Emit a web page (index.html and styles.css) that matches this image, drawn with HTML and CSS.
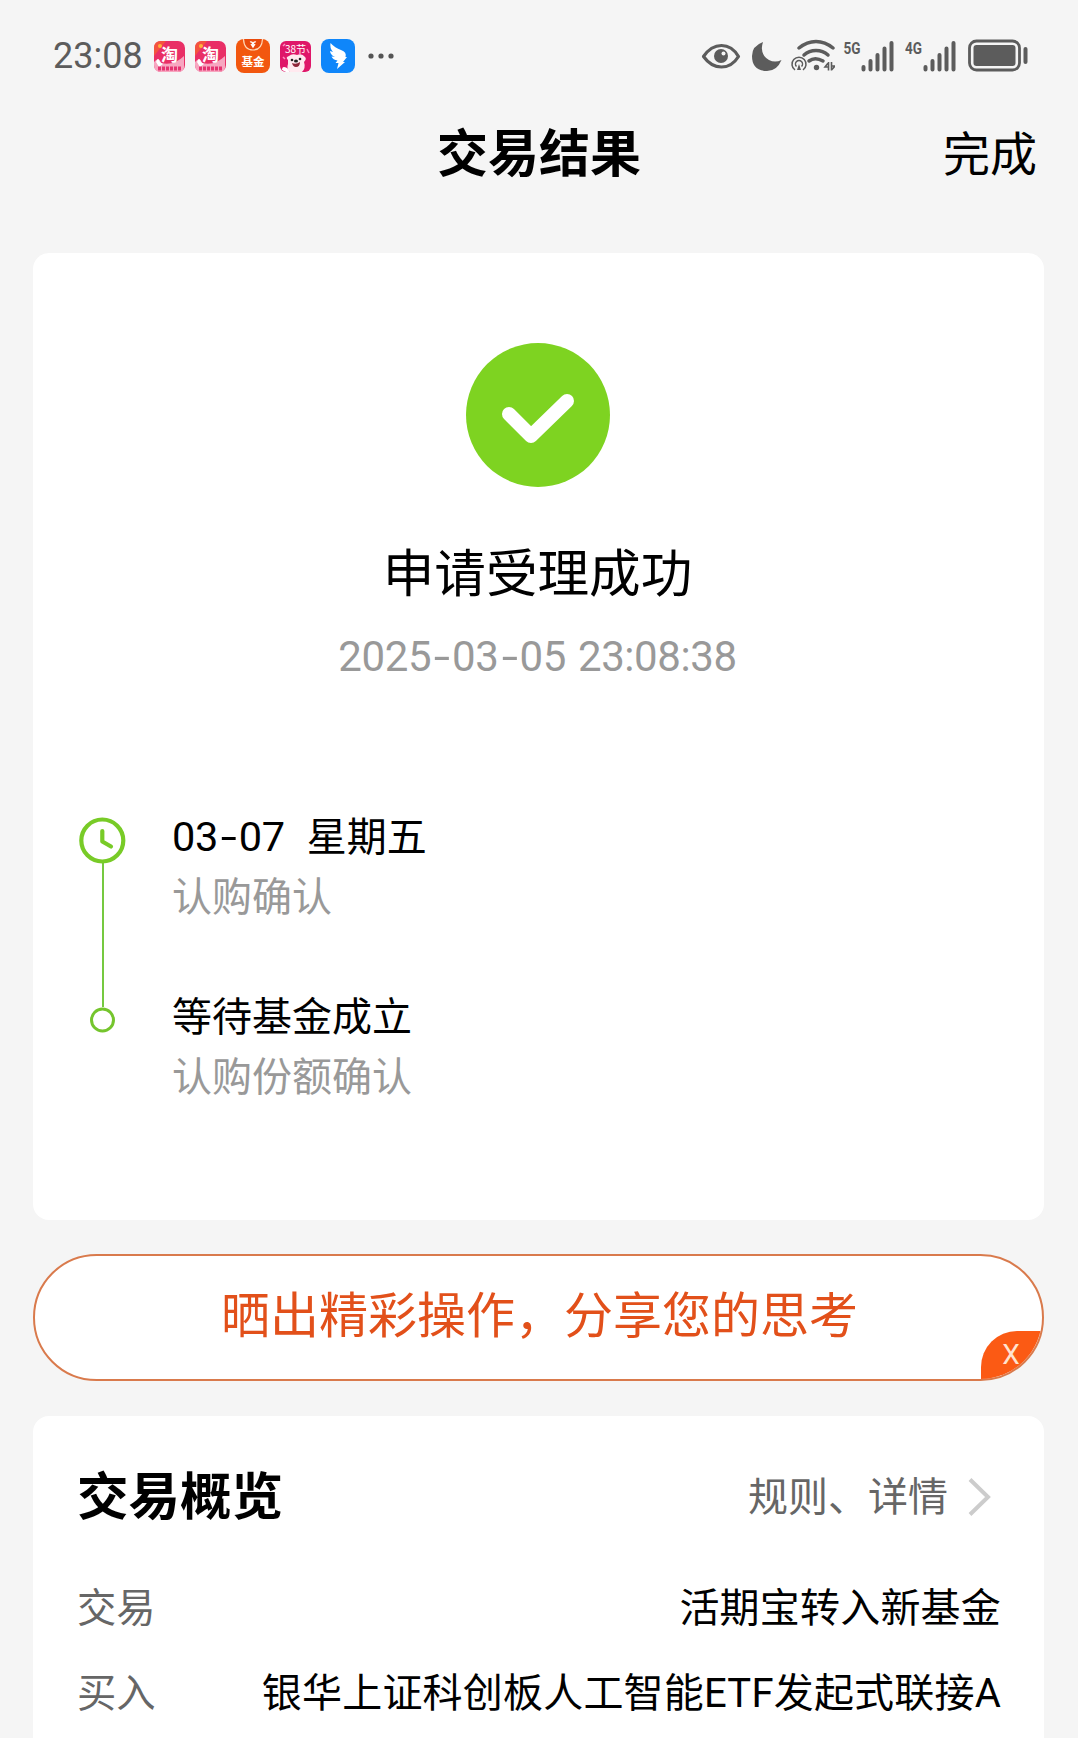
FILE: index.html
```html
<!DOCTYPE html>
<html lang="zh-CN">
<head>
    <meta charset="UTF-8">
    <meta name="viewport" content="width=device-width, initial-scale=1.0">
    <title>交易结果</title>
    <link rel="stylesheet" href="styles.css">
</head>
<body>
    <!-- Status bar -->
    <div class="status-bar">
        <span class="clock">23:08</span>
        <div class="app-icons">
            <svg width="31" height="31" viewBox="0 0 31 31">
                <rect width="31" height="31" rx="7" fill="#e92f66"/>
                <path d="M0 7Q0 0 7 0H12L0 15z" fill="#f4533f"/>
                <path d="M0 21Q5 15 7 22Q20 25 30 15V24Q31 31 24 31H7Q0 31 0 24z" fill="#f7a6c0"/>
                <path d="M2 21Q4 15 6 21L9 23L5 26z" fill="#fff"/>
                <path d="M4 27.500H27" stroke="#e53370" stroke-width="4" stroke-dasharray="3 1"/>
                <circle cx="6" cy="5" r="2" fill="#ffb13c"/>
                <text x="7" y="20" class="glyph-tao">淘</text>
            </svg>
            <svg width="31" height="31" viewBox="0 0 31 31">
                <rect width="31" height="31" rx="7" fill="#e92f66"/>
                <path d="M0 7Q0 0 7 0H12L0 15z" fill="#f4533f"/>
                <path d="M0 21Q5 15 7 22Q20 25 30 15V24Q31 31 24 31H7Q0 31 0 24z" fill="#f7a6c0"/>
                <path d="M2 21Q4 15 6 21L9 23L5 26z" fill="#fff"/>
                <path d="M4 27.500H27" stroke="#e53370" stroke-width="4" stroke-dasharray="3 1"/>
                <circle cx="6" cy="5" r="2" fill="#ffb13c"/>
                <text x="7" y="20" class="glyph-tao">淘</text>
            </svg>
            <svg width="34" height="34" viewBox="0 0 34 34">
                <rect width="34" height="34" rx="8" fill="#f2570f"/>
                <path d="M7.500 0Q8 11 17 11Q26 11 26.500 0" fill="#e94a0c" stroke="#ffd9b8" stroke-width="1.200"/>
                <path d="M14 3Q17 2 17 7M20 3Q17 2 17 7M15 5L17 8L19 5" fill="none" stroke="#fff" stroke-width="1.300"/>
                <text x="5.500" y="27" class="glyph-fund">基金</text>
            </svg>
            <svg width="31" height="31" viewBox="0 0 31 31">
                <rect width="31" height="31" rx="6" fill="#df1769"/>
                <path d="M3 5L5 3M27 8L29 12M3 16L5 18" stroke="#ff8fc0" stroke-width="1.500"/>
                <text x="5" y="12" class="glyph-sale">38节</text>
                <path d="M8 19Q5 16 9 15Q12 12 17 14Q22 12 25 16Q27 18 24 21Q26 27 22 31H10Q6 28 8 23z" fill="#ffe9ef"/>
                <circle cx="12" cy="19" r="1.300" fill="#222"/>
                <circle cx="20" cy="18" r="1.300" fill="#222"/>
                <ellipse cx="16" cy="20" rx="2" ry="1.500" fill="#222"/>
                <path d="M12 22Q16 24 20 21Q20 26 16 26Q13 26 12 22" fill="#8e2338"/>
                <path d="M2 29Q2 24 7 27L10 31H6z" fill="#fff"/>
            </svg>
            <svg width="34" height="34" viewBox="0 0 34 34">
                <rect width="34" height="34" rx="8" fill="#0f86fa"/>
                <path d="M9.500 4Q14 9 20 11Q26 13 24.500 18H26L22 23H24L16 30L17.500 24H14.500L16.500 21.500Q12 21 10.500 17.500L14 18Q9.500 16 9 12L12 13Q8.500 9 9.500 4z" fill="#fff"/>
            </svg>
        </div>
        <svg class="more" width="26" height="8" viewBox="0 0 26 8">
            <g fill="#555"><circle cx="3" cy="4" r="2.600"/><circle cx="13" cy="4" r="2.600"/><circle cx="23" cy="4" r="2.600"/></g>
        </svg>

        <div class="system-icons">
            <!-- eye comfort, do not disturb, wifi -->
            <svg width="134" height="34" viewBox="0 0 134 34">
                <path d="M2.500 17.500Q10 6.500 20.500 6.500Q31 6.500 37.500 17.500Q31 28 20.500 28Q10 28 2.500 17.500z" fill="none" stroke="#5c5c5c" stroke-width="3.200" stroke-linejoin="round"/>
                <circle cx="20" cy="17" r="7" fill="#5c5c5c"/>
                <circle cx="22.500" cy="14.500" r="2" fill="#f5f5f5"/>
                <path d="M62 3Q51 7 51 17Q51 32 66 32Q76 32 80.500 21Q74 24 68 21Q58 15 62 3z" fill="#5c5c5c"/>
                <g fill="none" stroke="#5c5c5c" stroke-width="3.500" stroke-linecap="round">
                    <path d="M98 9Q106 2.500 115 2.500Q124 2.500 132 9"/>
                    <path d="M103 16Q108 11.500 115 11.500Q122 11.500 127 16"/>
                    <path d="M108 22Q114 17.500 122 22"/>
                </g>
                <circle cx="115.500" cy="28.500" r="2.700" fill="#5c5c5c"/>
                <g fill="none" stroke="#5c5c5c" stroke-width="1.500">
                    <path d="M94 31A7 7 0 1 1 102 31"/>
                    <path d="M95.500 27.500A3.500 3.500 0 1 1 100.500 27.500"/>
                </g>
                <path d="M98 25L100 31H96z" fill="#5c5c5c"/>
                <path d="M127.500 23V31.500M127.500 23.500L124 28H127.500M130.500 31.500V23M130.500 31L134 27H130.500" fill="none" stroke="#5c5c5c" stroke-width="1.600"/>
            </svg>
            <!-- signal 5G -->
            <svg class="signal" width="52" height="34" viewBox="0 0 52 34">
                <text x="0.500" y="14.500" class="net" textLength="17" lengthAdjust="spacingAndGlyphs">5G</text>
                <path d="M20.500 30.500V28M27.500 30.500V22M34.500 30.500V16M41.500 30.500V9.500M48.500 30.500V4" stroke="#5c5c5c" stroke-width="4" stroke-linecap="round"/>
            </svg>
            <!-- signal 4G -->
            <svg class="signal" width="52" height="34" viewBox="0 0 52 34">
                <text x="0" y="14.500" class="net" textLength="17" lengthAdjust="spacingAndGlyphs">4G</text>
                <path d="M20.500 30.500V28M27.500 30.500V22M34.500 30.500V16M41.500 30.500V9.500M48.500 30.500V4" stroke="#5c5c5c" stroke-width="4" stroke-linecap="round"/>
            </svg>
            <svg class="battery" width="61" height="34" viewBox="0 0 61 34">
                <rect x="1.500" y="2" width="50" height="29" rx="7" fill="none" stroke="#5c5c5c" stroke-width="2.800"/>
                <rect x="5.500" y="6" width="42" height="21" rx="3" fill="#5c5c5c"/>
                <path d="M57.500 10V23" stroke="#5c5c5c" stroke-width="4" stroke-linecap="round"/>
            </svg>
        </div>
    </div>

    <header>
        <h1>交易结果</h1>
        <a class="done">完成</a>
    </header>

    <!-- Result -->
    <section class="card result">
        <svg class="check" width="144" height="144" viewBox="0 0 144 144">
            <circle cx="72" cy="72" r="72" fill="#7ed321"/>
            <path d="M43 71L65 93L101 58" fill="none" stroke="#fff" stroke-width="14" stroke-linecap="round" stroke-linejoin="round"/>
        </svg>
        <h2>申请受理成功</h2>
        <p class="time">2025<i>-</i>03<i>-</i>05 23:08:38</p>

        <div class="timeline">
            <svg class="track" width="48" height="220" viewBox="0 0 48 220">
                <path d="M25 45V190" stroke="#75c940" stroke-width="2"/>
                <circle cx="24.300" cy="23.500" r="21" fill="#fff" stroke="#78cb27" stroke-width="4.200"/>
                <path d="M24.300 14V24.500L33 29.500" fill="none" stroke="#78cb27" stroke-width="4.200" stroke-linecap="round" stroke-linejoin="round"/>
                <circle cx="24.500" cy="203" r="11" fill="#fff" stroke="#75c52d" stroke-width="3"/>
            </svg>
            <div class="steps">
                <div class="step">
                    <div class="step-title"><span class="date">03<i>-</i>07</span>星期五</div>
                    <div class="step-note">认购确认</div>
                </div>
                <div class="step">
                    <div class="step-title">等待基金成立</div>
                    <div class="step-note">认购份额确认</div>
                </div>
            </div>
        </div>
    </section>

    <!-- Share banner -->
    <div class="share">
        <span>晒出精彩操作，分享您的思考</span>
        <button class="share-close">X</button>
    </div>

    <!-- Overview -->
    <section class="card overview">
        <div class="overview-head">
            <h2>交易概览</h2>
            <a class="detail"><span>规则、详情</span>
                <svg width="24" height="40" viewBox="0 0 24 40">
                    <path d="M2 2.500L20 20L2 37.500" fill="none" stroke="#ccc" stroke-width="4"/>
                </svg>
            </a>
        </div>
        <div class="row">
            <span class="label">交易</span>
            <span class="value">活期宝转入新基金</span>
        </div>
        <div class="row">
            <span class="label">买入</span>
            <span class="value">银华上证科创板人工智能ETF发起式联接A</span>
        </div>
    </section>
</body>
</html>
```
FILE: styles.css
```css
* {
    box-sizing: border-box;
}
body {
    margin: 0;
    height: 1738px;
    overflow: hidden;
    background-color: #f5f5f5;
    color: #000;
    font-family: "Noto Sans CJK SC", sans-serif;
    font-weight: 400;
}
h1, h2, p {
    margin: 0;
}
svg {
    display: block;
    flex: none;
}

/* Status bar */
.status-bar {
    display: flex;
    align-items: center;
    height: 112px;
    padding: 0 49px 0 53px;
}
.clock {
    width: 101px;
    font-family: Roboto, sans-serif;
    font-size: 36px;
    color: #5c5c5c;
}
.app-icons {
    display: flex;
    align-items: center;
    gap: 10px;
}
.more {
    margin-left: 13px;
}
.glyph-tao {
    font-size: 17px;
    font-weight: 700;
    fill: #fff;
}
.glyph-fund {
    font-size: 11.500px;
    font-weight: 700;
    fill: #fff;
}
.glyph-sale {
    font-size: 10px;
    fill: #fff;
}
.system-icons {
    display: flex;
    align-items: center;
    margin-left: auto;
}
.signal {
    margin-left: 8px;
}
.signal + .signal {
    margin-left: 10px;
}
.net {
    font-family: Roboto, sans-serif;
    font-size: 17px;
    font-weight: 700;
    fill: #5c5c5c;
}
.battery {
    margin-left: 11px;
}

/* Title bar */
header {
    display: grid;
    grid-template-columns: 1fr auto 1fr;
    align-items: center;
    height: 77px;
    padding: 0 41px;
}
h1 {
    grid-column: 2;
    font-size: 51px;
    line-height: 77px;
    font-weight: 700;
}
.done {
    justify-self: end;
    font-size: 47px;
    line-height: 77px;
}

.card {
    margin: 0 34px 0 33px;
    background-color: #fff;
    border-radius: 16px;
}

/* Result */
.result {
    height: 967px;
    margin-top: 64px;
    padding: 90px 2px 0 0;
    text-align: center;
}
.check {
    margin: 0 auto;
}
.result h2 {
    margin-top: 48px;
    font-size: 51.600px;
    line-height: 70px;
    font-weight: 400;
}
.time {
    margin-top: 24px;
    font-family: Roboto, sans-serif;
    font-size: 42px;
    line-height: 56px;
    letter-spacing: -0.4px;
    word-spacing: 2px;
    color: #999;
}
i {
    display: inline-block;
    width: 21px;
    font-style: normal;
    transform: scaleX(1.4);
    text-align: center;
}
.timeline {
    display: flex;
    margin-top: 132px;
    padding-left: 45px;
    text-align: left;
}
.steps {
    margin-left: 46px;
    font-size: 40px;
    line-height: 60px;
}
.step {
    height: 180px;
    margin-top: -13px;
    margin-bottom: 13px;
}
.step-title {
    height: 60px;
}
.date {
    margin-right: 22px;
    font-family: Roboto, sans-serif;
    font-size: 41.500px;
    line-height: 1;
    letter-spacing: -0.4px;
}
.step-note {
    color: #999;
}

/* Share banner */
.share {
    display: flex;
    position: relative;
    align-items: center;
    justify-content: center;
    height: 127px;
    margin: 34px 34px 35px 33px;
    overflow: hidden;
    border: 2px solid #d97a4c;
    border-radius: 64px;
    background-color: #fff;
    color: #e2501a;
    font-size: 49px;
}
.share span {
    margin-top: -13px;
    padding-left: 2px;
}
.share-close {
    position: absolute;
    right: 0;
    bottom: 0;
    width: 61px;
    height: 48px;
    padding: 0 1px 2px 0;
    border: 0;
    border-radius: 36px 0 0 0;
    background-color: #fb5a14;
    color: #ffe3cf;
    font-family: Roboto, sans-serif;
    font-size: 28px;
    font-weight: 400;
}

/* Overview */
.overview {
    height: 400px;
    padding: 38px 43px 0 44px;
    border-radius: 16px 16px 0 0;
}
.overview-head {
    display: flex;
    align-items: center;
    justify-content: space-between;
    height: 76px;
    margin-bottom: 32px;
}
.overview h2 {
    font-size: 51.500px;
    font-weight: 700;
}
.detail {
    display: flex;
    align-items: center;
    gap: 20px;
    margin-top: 4px;
    padding-right: 9px;
    font-size: 40px;
    color: #666;
}
.detail svg {
    margin-top: 6px;
}
.row {
    display: flex;
    align-items: center;
    justify-content: space-between;
    height: 85px;
}
.label {
    font-size: 39.300px;
    color: #666;
}
.value {
    font-family: Roboto, "Noto Sans CJK SC", sans-serif;
    font-size: 40px;
    letter-spacing: 0.2px;
}
```
